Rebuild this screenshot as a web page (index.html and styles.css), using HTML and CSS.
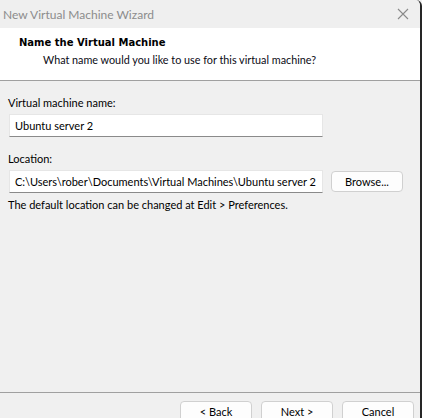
FILE: index.html
```html
<!DOCTYPE html>
<html>
<head>
<meta charset="utf-8">
<link rel="stylesheet" href="styles.css">
</head>
<body>
<div class="window">
  <div class="titlebar">
    <span class="title">New Virtual Machine Wizard</span>
    <svg class="close" width="12" height="12" viewBox="0 0 12 12"><path d="M1 1L11 11M11 1L1 11" stroke="#8a8a8a" stroke-width="1.1" fill="none"/></svg>
  </div>
  <div class="header">
    <div class="heading">Name the Virtual Machine</div>
    <div class="subheading">What name would you like to use for this virtual machine?</div>
  </div>
  <div class="content">
    <div class="label">Virtual machine name:</div>
    <div class="row">
      <div class="input">Ubuntu server 2</div>
    </div>
    <div class="label label-loc">Location:</div>
    <div class="row">
      <div class="input">C:\Users\rober\Documents\Virtual Machines\Ubuntu server 2</div>
      <div class="btn browse">Browse...</div>
    </div>
    <div class="hint">The default location can be changed at Edit &gt; Preferences.</div>
  </div>
  <div class="footer">
    <div class="btn">&lt; Back</div>
    <div class="btn">Next &gt;</div>
    <div class="btn">Cancel</div>
  </div>
</div>
</body>
</html>
```
FILE: styles.css
```css
html, body {
  margin: 0;
  padding: 0;
  background: #f0f0f0;
}
body {
  width: 422px;
  height: 418px;
  overflow: hidden;
  font-family: Lato, "Noto Sans", sans-serif;
  font-size: 11px;
  color: #000;
}
.window {
  width: 422px;
  height: 418px;
  box-sizing: border-box;
  border-right: 2px solid #262626;
  border-top-right-radius: 6px;
  display: flex;
  flex-direction: column;
  background: #f0f0f0;
  overflow: hidden;
}
.titlebar {
  height: 28px;
  flex: none;
  display: flex;
  align-items: center;
  justify-content: space-between;
  padding: 0 8px 0 3px;
  background: #efefef;
}
.title {
  color: #8c8c8c;
  font-size: 12px;
}
.close {
  display: block;
  margin-right: 3px;
}
.header {
  flex: none;
  height: 52px;
  background: #fff;
  border-bottom: 1px solid #a0a0a0;
  display: flex;
  flex-direction: column;
}
.heading {
  font-family: "DejaVu Sans", sans-serif;
  font-weight: bold;
  font-size: 10px;
  margin: 8px 0 0 19px;
  line-height: 14px;
}
.subheading {
  margin: 2px 0 0 43px;
  line-height: 16px;
  font-size: 10.8px;
  color: #0a0a14;
}
.content {
  flex: 1;
  padding: 14px 0 0 9px;
  border-bottom: 1px solid #a0a0a0;
}
.label {
  line-height: 16px;
  margin-left: -1px;
}
.label-loc {
  margin-top: 14px;
}
.row {
  display: flex;
  align-items: center;
  margin-top: 3px;
}
.input {
  width: 314px;
  height: 23px;
  box-sizing: border-box;
  background: #fff;
  border: 1px solid #e6e6e6;
  border-bottom: 1px solid #8a8a8a;
  padding: 0 0 0 5px;
  line-height: 21px;
  white-space: nowrap;
  overflow: hidden;
}
.browse {
  margin-left: 8px;
  width: 73px;
}
.hint {
  margin-top: 4px;
  margin-left: -1px;
  line-height: 16px;
}
.btn {
  width: 72px;
  height: 21px;
  box-sizing: border-box;
  background: #fdfdfd;
  border: 1px solid #d0d0d0;
  border-radius: 4px;
  text-align: center;
  line-height: 19px;
}
.footer {
  flex: none;
  height: 17px;
  display: flex;
  justify-content: flex-end;
  align-items: flex-start;
  gap: 9px;
  padding: 8px 6px 0 0;
}
.footer .btn {
  flex: none;
  height: 24px;
  line-height: 19px;
}
```
